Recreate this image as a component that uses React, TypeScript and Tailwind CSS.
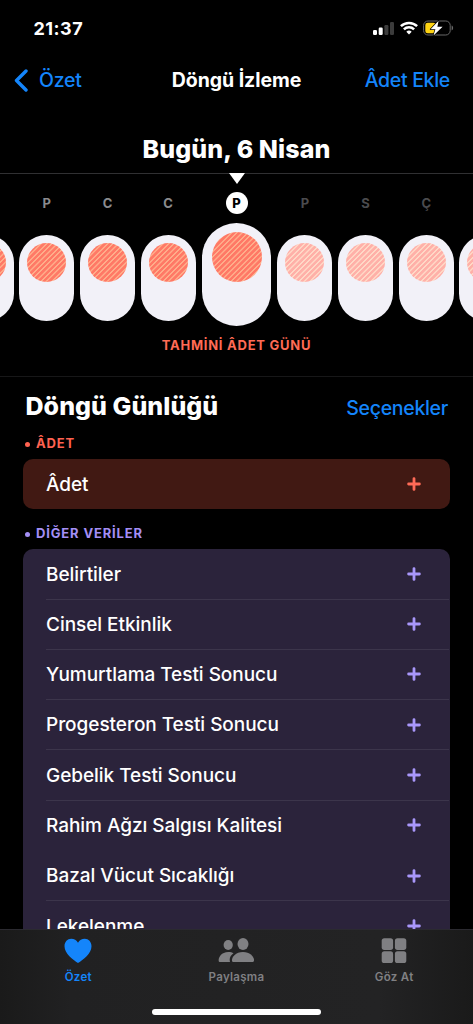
import React from "react";

const ROWS = [
  { label: "Belirtiler", divider: false },
  { label: "Cinsel Etkinlik", divider: true },
  { label: "Yumurtlama Testi Sonucu", divider: true },
  { label: "Progesteron Testi Sonucu", divider: true },
  { label: "Gebelik Testi Sonucu", divider: true },
  { label: "Rahim Ağzı Salgısı Kalitesi", divider: true },
  { label: "Bazal Vücut Sıcaklığı", divider: false },
  { label: "Lekelenme", divider: true },
];

const DAYS = [
  { letter: "", predicted: false },
  { letter: "P", predicted: false },
  { letter: "C", predicted: false },
  { letter: "C", predicted: false },
  { letter: "P", predicted: false, today: true },
  { letter: "P", predicted: true },
  { letter: "S", predicted: true },
  { letter: "Ç", predicted: true },
  { letter: "", predicted: true },
];

function Plus({ className }: { className: string }) {
  return (
    <svg className={className} width="14" height="14" viewBox="0 0 14 14" fill="none" stroke="currentColor" strokeWidth="2.8" strokeLinecap="round">
      <path d="M7 1.6v10.8M1.6 7h10.8" />
    </svg>
  );
}

function StatusBar() {
  return (
    <div className="flex h-[56px] shrink-0 items-center justify-between pr-[19px] pl-[33.5px]">
      <span className="pt-px text-[18px] leading-6 font-bold tracking-[0.5px]">21:37</span>
      <div className="flex items-center">
        <svg width="21" height="13" viewBox="0 0 21 13">
          <rect x="0" y="8" width="4" height="5" rx="1.2" fill="#fff" />
          <rect x="5.7" y="5.6" width="4" height="7.4" rx="1.2" fill="#fff" />
          <rect x="11.4" y="3" width="4" height="10" rx="1.2" fill="#3c3c3c" />
          <rect x="17" y="0" width="4" height="13" rx="1.2" fill="#3c3c3c" />
        </svg>
        <svg className="ml-[6px]" width="18" height="14" viewBox="0 0 18 14" fill="none" stroke="#fff" strokeWidth="2.5">
          <path d="M.9 5.2a11.6 11.6 0 0 1 16.2 0M3.9 8.4a7.2 7.2 0 0 1 10.2 0" />
          <path d="M9 13.5 6.3 10.8a3.9 3.9 0 0 1 5.4 0Z" fill="#fff" stroke="none" />
        </svg>
        <svg className="ml-[5px]" width="31" height="16" viewBox="0 0 31 16">
          <rect x=".6" y="1" width="26.6" height="14" rx="4.4" fill="none" stroke="#686868" />
          <rect x="2.3" y="2.7" width="10.5" height="10.6" rx="2.4" fill="#fdd313" />
          <path d="M28.6 5.6c2 .6 2 4.2 0 4.8Z" fill="#686868" />
          <path d="M15.6.8 7.6 9.2h4.8l-1.900 6.200L19.600 6.700h-5.200Z" fill="#fff" stroke="#000" strokeWidth="1.4" strokeLinejoin="round" paintOrder="stroke" />
        </svg>
      </div>
    </div>
  );
}

function Day({ letter, predicted, today }: { letter: string; predicted: boolean; today?: boolean }) {
  const fill = predicted
    ? "bg-[repeating-linear-gradient(135deg,#ffb0a8_0px,#ffb0a8_2px,#ffd8c6_2.4px,#ffd8c6_3.4px,#ffb0a8_3.8px)]"
    : "bg-[repeating-linear-gradient(135deg,#ff7966_0px,#ff7966_2px,#ffad8a_2.4px,#ffad8a_3.4px,#ff7966_3.8px)]";
  if (today) {
    return (
      <div className="mx-[0.7px] flex w-[69px] shrink-0 flex-col items-center">
        <svg width="16" height="11" viewBox="0 0 16 11">
          <path d="M0 0h16L8 11Z" fill="#fff" />
        </svg>
        <span className="mt-[8px] flex h-[22px] w-[22px] items-center justify-center rounded-full bg-white text-[13px] leading-none font-extrabold text-black">
          {letter}
        </span>
        <div className="mt-[9px] flex h-[103px] w-[69px] justify-center rounded-full bg-[#f2f1f8] pt-[9px]">
          <div className={`h-[50px] w-[50px] rounded-full ${fill}`} />
        </div>
      </div>
    );
  }
  return (
    <div className="flex w-[55px] shrink-0 flex-col items-center pt-[21px]">
      <span className={`h-[18px] text-[13px] leading-[18px] font-bold ${predicted ? "text-[#4b4b4e]" : "text-[#8b8b8e]"}`}>{letter}</span>
      <div className="mt-[23px] flex h-[86px] w-[55px] justify-center rounded-full bg-[#f2f1f8] pt-[8px]">
        <div className={`h-[39px] w-[39px] rounded-full ${fill}`} />
      </div>
    </div>
  );
}

export default function App() {
  return (
    <div className="flex h-[1024px] w-[473px] flex-col overflow-hidden bg-black font-['Inter',sans-serif] text-white">
      <StatusBar />
      <nav className="grid h-[48px] shrink-0 grid-cols-[1fr_auto_1fr] items-center px-[14px] text-[19.5px] leading-6">
        <span className="flex items-center gap-[11px] text-[#1485fb]">
          <svg width="14" height="23" viewBox="0 0 14 23" fill="none" stroke="currentColor" strokeWidth="3.4" strokeLinecap="round" strokeLinejoin="round">
            <path d="M12 2 2.500 11.500l9.500 9.500" />
          </svg>
          <span className="font-[450] tracking-[-0.25px]">Özet</span>
        </span>
        <span className="font-bold tracking-[-0.05px]">Döngü İzleme</span>
        <span className="pr-[9px] text-right font-[450] tracking-[-0.3px] text-[#1485fb]">Âdet Ekle</span>
      </nav>

      <h1 className="flex h-[70px] shrink-0 items-end justify-center border-b border-[#303032] pb-[8px] text-[25px] leading-8 font-extrabold tracking-[0.1px]">
        Bugün, 6 Nisan
      </h1>
      <section className="-mt-px flex h-[204px] shrink-0 flex-col items-center border-b border-[#171718]">
        <div className="flex h-[160px] w-[473px] shrink-0 justify-center gap-[5.7px] overflow-hidden">
          {DAYS.map((day, i) => (
            <Day key={i} {...day} />
          ))}
        </div>
        <p className="text-[13px] leading-[24px] font-bold tracking-[0.75px] text-[#ff6b55]">TAHMİNİ ÂDET GÜNÜ</p>
      </section>

      <main className="flex min-h-0 flex-1 flex-col overflow-hidden pr-[23px] pl-[23px]">
        <div className="flex h-[56px] shrink-0 items-center justify-between pr-[2px] pl-[2.5px]">
          <h2 className="pt-[2px] text-[25px] leading-8 font-extrabold tracking-[0.05px]">Döngü Günlüğü</h2>
          <span className="pt-[7px] text-[19.5px] font-[450] tracking-[-0.3px] text-[#1485fb]">Seçenekler</span>
        </div>
        <div className="flex h-[22px] shrink-0 items-center gap-[6px] pl-[2px] text-[13px] font-bold tracking-[0.85px] text-[#ff6250]">
          <i className="h-[5px] w-[5px] rounded-full bg-current" />
          <span>ÂDET</span>
        </div>
        <div className="mt-[4px] flex h-[50px] shrink-0 items-center justify-between rounded-[10px] bg-[#411913] pr-[29px] pl-[23px]">
          <span className="pt-[2px] text-[19px] font-[540] tracking-[-0.05px]">Âdet</span>
          <Plus className="text-[#ff6b57]" />
        </div>
        <div className="mt-[14px] flex h-[22px] shrink-0 items-center gap-[6px] pl-[2px] text-[13px] font-bold tracking-[0.85px] text-[#a48ff5]">
          <i className="h-[5px] w-[5px] rounded-full bg-current" />
          <span>DİĞER VERİLER</span>
        </div>
        <div className="mt-[4px] shrink-0 rounded-t-[10px] bg-[#2b233b] pr-px pl-[23px]">
          {ROWS.map((row, i) => (
            <div
              key={row.label}
              className={`flex items-center justify-between border-t pr-[28px] ${i ? "h-[50.3px]" : "h-[49.5px]"} ${row.divider ? "border-[#3c354b]" : "border-transparent"}`}
            >
              <span className="pt-[2px] text-[19px] font-[540] tracking-[-0.04px] whitespace-nowrap">{row.label}</span>
              <Plus className="text-[#a997fb]" />
            </div>
          ))}
        </div>
      </main>

      <footer className="flex h-[95px] shrink-0 flex-col items-center border-t border-[#2b2a30] bg-[linear-gradient(90deg,#1a1a1a_0%,#212122_15%,#232324_80%,#1a1a1a_100%)]">
        <div className="grid h-[79px] w-full grid-cols-3 text-[11.5px] leading-4 font-semibold tracking-[0.3px] text-[#808083]">
          <div className="flex flex-col items-center pt-[8px] pr-px text-[#1485fb]">
            <svg width="28" height="26" viewBox="0 0 28 26">
              <path d="M14 25C9 21.8.5 15.4.5 8.2.5 3.8 3.5.8 7.2.8c3 0 5.4 1.6 6.800 4 1.400-2.400 3.800-4 6.800-4 3.700 0 6.700 3 6.700 7.400C27.500 15.400 19 21.800 14 25Z" fill="currentColor" />
            </svg>
            <span className="mt-[5px]">Özet</span>
          </div>
          <div className="flex flex-col items-center pt-[8px]">
            <svg width="36" height="26" viewBox="0 0 36 26" fill="currentColor">
              <ellipse cx="10.200" cy="7" rx="4.600" ry="5" />
              <ellipse cx="25" cy="6" rx="5.500" ry="5.900" />
              <path d="M1.500 24C-.5 24 .5 14 10.500 14c2 0 3.700.4 5 1.200-3.400 2.300-4.400 5.700-3.500 8.800Z" />
              <path d="M15 24c-3-1 .4-9.900 10-9.900s13 8.900 10 9.900Z" />
            </svg>
            <span className="mt-[5px]">Paylaşma</span>
          </div>
          <div className="flex flex-col items-center pt-[8px]">
            <svg width="26" height="26" viewBox="0 0 26 26" fill="currentColor">
              <rect x=".7" y=".2" width="11.400" height="11.700" rx="2.600" />
              <rect x="13.900" y=".2" width="11.400" height="11.700" rx="2.600" />
              <rect x=".7" y="13.300" width="11.400" height="11.700" rx="2.600" />
              <rect x="13.900" y="13.300" width="11.400" height="11.700" rx="2.600" />
            </svg>
            <span className="mt-[5px]">Göz At</span>
          </div>
        </div>
        <div className="h-[6px] w-[169px] rounded-full bg-white" />
      </footer>
    </div>
  );
}
